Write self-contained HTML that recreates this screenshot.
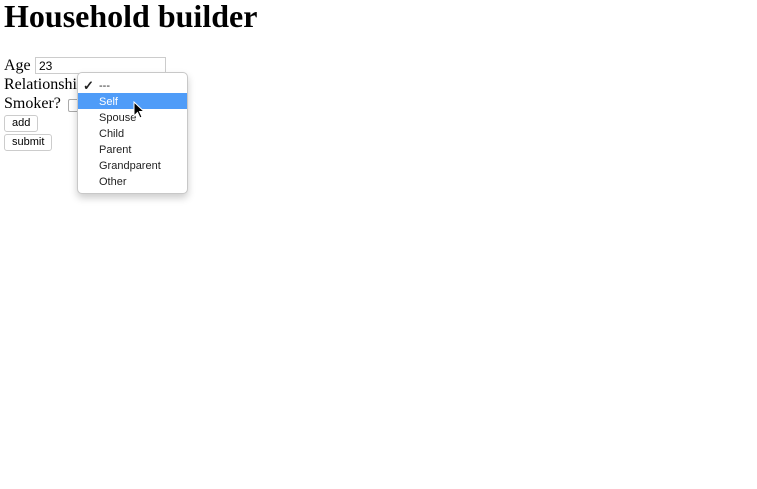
<!DOCTYPE html>
<html><head><style>
body{margin:0;background:#fff;font-family:"Liberation Serif",serif;position:relative;width:757px;height:489px;overflow:hidden;color:#000}
h1{position:absolute;left:4px;top:-2px;margin:0;font-size:32px;font-weight:bold}
.l{position:absolute;left:4px;font-size:16px}
.inp{position:absolute;left:35px;top:57px;height:17px;border:1px solid #ccc;font:12px "Liberation Sans",sans-serif;line-height:17px;padding-left:3px;box-sizing:border-box;width:131px}
.btn{position:absolute;left:4px;height:15px;border:1px solid #ccc;border-radius:3px;font:11px "Liberation Sans",sans-serif;line-height:15px;padding:0 7px;background:#fff}
.cb{position:absolute;left:68px;top:99px;width:11px;height:11px;border:1px solid #aaa;border-radius:2px}
.dd{position:absolute;left:77px;top:72px;width:109px;height:120px;background:#fff;border:1px solid #c8c8c8;border-radius:5px;box-shadow:0 4px 8px rgba(0,0,0,.2);font:11px "Liberation Sans",sans-serif;color:#222}
.it{position:absolute;left:0;width:109px;height:16px;line-height:16px;padding-left:21px;box-sizing:border-box}
.sel{background:#4f9cf8;color:#fff}
</style></head><body>
<h1>Household builder</h1>
<div class="l" style="top:57px">Age</div><div class="inp">23</div>
<div class="l" style="top:76px">Relationship</div>
<div class="l" style="top:95px">Smoker?</div><div class="cb"></div>
<div class="btn" style="top:115px">add</div>
<div class="btn" style="top:134px">submit</div>
<div class="dd">
<div class="it" style="top:5px"><span style="position:absolute;left:5px;font-size:13px;font-weight:bold">✓</span>---</div>
<div class="it sel" style="top:20px;line-height:18px">Self</div>
<div class="it" style="top:37px">Spouse</div>
<div class="it" style="top:53px">Child</div>
<div class="it" style="top:69px">Parent</div>
<div class="it" style="top:85px">Grandparent</div>
<div class="it" style="top:101px">Other</div>
</div>
<svg style="position:absolute;left:133px;top:101px" width="14" height="20"><path d="M1 1 L1 15 L4.5 11.5 L7 17 L9 16 L6.5 10.5 L11 10.5 Z" fill="#000" stroke="#fff" stroke-width="1"/></svg>
</body></html>
